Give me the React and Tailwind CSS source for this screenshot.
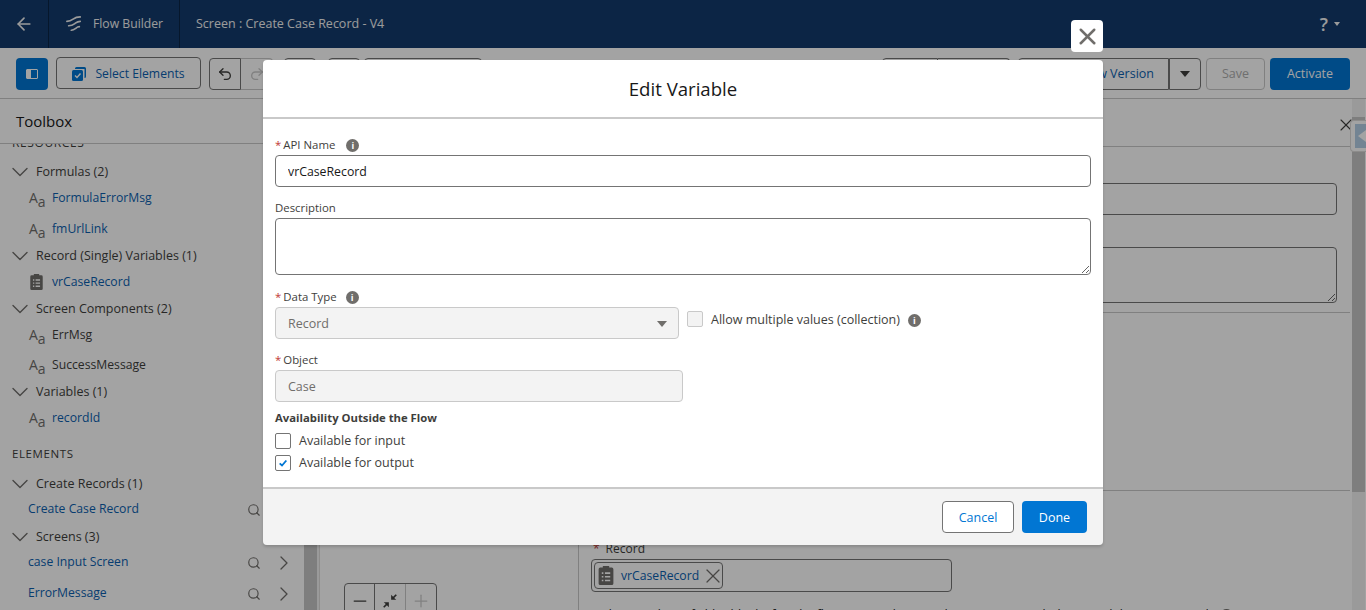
import { ArrowLeft, ChevronDown, ChevronRight, Search, X, Minus, Plus, Undo2, Redo2 } from "lucide-react"

const resources = [
  { name: "Formulas (2)", items: [{ label: "FormulaErrorMsg", link: true }, { label: "fmUrlLink", link: true }] },
  { name: "Record (Single) Variables (1)", items: [{ label: "vrCaseRecord", link: true, record: true }] },
  { name: "Screen Components (2)", tight: true, items: [{ label: "ErrMsg" }, { label: "SuccessMessage" }] },
  { name: "Variables (1)", items: [{ label: "recordId", link: true }] },
]

const elements = [
  { name: "Create Records (1)", items: ["Create Case Record"] },
  { name: "Screens (3)", items: ["case Input Screen", "ErrorMessage"] },
]

function ClipboardIcon({ className }) {
  return (
    <svg viewBox="0 0 16 18" className={className} fill="currentColor">
      <path d="M5 0h6v1.500h2.500A1.500 1.500 0 0 1 15 3v13.500a1.500 1.500 0 0 1-1.500 1.500h-11A1.500 1.500 0 0 1 1 16.500V3a1.500 1.500 0 0 1 1.500-1.500H5z" />
      <path d="M4 6h1.500v1.500H4zM7 6h5v1.500H7zM4 9.500h1.500V11H4zM7 9.500h5V11H7zM4 13h1.500v1.500H4zM7 13h5v1.500H7z" fill="#fff" />
    </svg>
  )
}

function FlowLogo() {
  return (
    <svg viewBox="0 0 18 18" className="h-4 w-4 shrink-0" fill="none" stroke="currentColor" strokeWidth="1.900" strokeLinecap="round">
      <path d="M1 6c3 0 5-1 7-2.500S12 1 16 1" />
      <path d="M3 11c3 0 5-1 7-2.500S13 6 16 6" />
      <path d="M6 16c2 0 3-.6 4.500-1.800S13 12 15 12" />
    </svg>
  )
}

function InfoDot() {
  return (
    <span className="inline-flex h-[13px] w-[13px] items-center justify-center rounded-full bg-[#706e6b] text-[9px] leading-none font-bold text-white">
      i
    </span>
  )
}

function Req() {
  return <span className="mr-[2px] text-[#c23934]">*</span>
}

function CheckBox({ checked }) {
  return (
    <span className="flex h-4 w-4 items-center justify-center rounded-[2px] border border-[#747474] bg-white">
      {checked && (
        <svg viewBox="0 0 12 12" className="h-[10px] w-[10px]" fill="none" stroke="#0176d3" strokeWidth="2.200">
          <path d="M2 6.500 4.800 9 10 3" />
        </svg>
      )}
    </span>
  )
}

function AaIcon() {
  return (
    <span className="flex w-[23px] shrink-0 items-baseline text-[#706e6b]">
      <span className="text-[14px] leading-none">A</span>
      <span className="relative top-[4px] text-[14px] leading-none">a</span>
    </span>
  )
}

function Group({ name, tight, children }) {
  return (
    <div className="mb-px">
      <div className="flex h-[26px] items-center pl-[6px] text-[#3e3e3c]">
        <ChevronDown size={28} strokeWidth={1.200} className="mr-[2px] shrink-0 text-[#706e6b]" />
        {name}
      </div>
      <div className={tight ? "flex flex-col gap-[4px]" : "flex flex-col gap-[5px]"}>{children}</div>
    </div>
  )
}

function Sidebar() {
  return (
    <aside className="flex h-full w-[320px] shrink-0 flex-col border-r border-[#dddbda] bg-white">
      <div className="flex h-[45px] shrink-0 items-center border-b border-[#c9c9c9] pl-4 text-[15px] text-[#181818]">Toolbox</div>
      <div className="flex min-h-0 flex-1">
        <div className="w-[305px] overflow-hidden">
          <div className="-mt-[10px] mb-[7px] pl-3 text-[12px] tracking-[0.6px] text-[#3e3e3c]">RESOURCES</div>
          {resources.map((group) => (
            <Group key={group.name} name={group.name} tight={group.tight}>
              {group.items.map((item) => (
                <div key={item.label} className="flex h-[26px] items-center pl-[29px]">
                  {item.record ? (
                    <span className="w-[23px] shrink-0">
                      <ClipboardIcon className="h-[16px] w-[15px] text-[#706e6b]" />
                    </span>
                  ) : (
                    <AaIcon />
                  )}
                  <span className={item.link ? "text-[12.200px] text-[#0b5fb0]" : "text-[12.200px] text-[#3e3e3c]"}>{item.label}</span>
                </div>
              ))}
            </Group>
          ))}
          <div className="mt-[14px] mb-[8px] pl-3 text-[11.500px] leading-[18px] tracking-[0.6px] text-[#3e3e3c]">ELEMENTS</div>
          {elements.map((group) => (
            <Group key={group.name} name={group.name}>
              {group.items.map((item) => (
                <div key={item} className="flex h-[26px] items-center pr-[8px] pl-[28px] text-[#0b5fb0]">
                  <span className="flex-1 pb-[2px] text-[12.200px]">{item}</span>
                  <Search size={14} className="mr-[11px] text-[#706e6b]" />
                  <ChevronRight size={24} strokeWidth={1.300} className="text-[#706e6b]" />
                </div>
              ))}
            </Group>
          ))}
        </div>
        <div className="w-[15px] bg-[#f1f1f1]">
          <div className="h-full w-[13px] bg-[#c6c6c6]"></div>
        </div>
      </div>
    </aside>
  )
}

function Toolbar() {
  const outline = "flex h-8 items-center justify-center rounded border border-[#747474] bg-white"
  return (
    <div className="flex h-[51px] shrink-0 items-center justify-between border-b border-[#c9c9c9] bg-white px-4 pt-px">
      <div className="flex items-center">
        <button className="flex h-8 w-8 items-center justify-center rounded bg-[#0176d3]">
          <span className="flex h-[10px] w-3 rounded-[1px] border-[1.500px] border-white">
            <span className="w-1 bg-white"></span>
          </span>
        </button>
        <button className={`${outline} mb-[2px] ml-2 w-[145px] gap-[9px] pt-[2px] text-[12.200px] text-[#0b5fb0]`}>
          <svg viewBox="0 0 14 14" className="h-[14px] w-[14px]">
            <path d="M3 1.500A1.500 1.500 0 0 1 4.500 0h8A1.500 1.500 0 0 1 14 1.500v8a1.500 1.500 0 0 1-1.500 1.500V2h-9.500z" fill="#0176d3" />
            <rect x="0" y="3" width="11" height="11" rx="1.500" fill="#0176d3" />
            <path d="M3 8.500 5 10.500 8.500 6.500" fill="none" stroke="#fff" strokeWidth="1.400" />
          </svg>
          Select Elements
        </button>
        <div className="ml-[8px] flex">
          <button className={`${outline} w-8 rounded-r-none`}>
            <Undo2 size={16} className="text-[#3e3e3c]" />
          </button>
          <button className={`${outline} w-8 rounded-l-none border-l-0 border-[#c9c9c9]`}>
            <Redo2 size={16} className="text-[#c9c9c9]" />
          </button>
        </div>
        <button className={`${outline} ml-[11px] w-8`}></button>
        <button className={`${outline} ml-[12px] w-8`}></button>
        <button className={`${outline} ml-1 w-[118px]`}></button>
      </div>
      <div className="flex items-center">
        <div className="flex">
          <button className={`${outline} w-[56px] rounded-r-none`}></button>
          <button className={`${outline} w-[72px] rounded-l-none border-l-0`}></button>
        </div>
        <div className="ml-2 flex">
          <button className={`${outline} w-[151px] justify-end rounded-r-none pr-[14px] text-[#0b5fb0]`}>Save as New Version</button>
          <button className={`${outline} w-8 rounded-l-none`}>
            <span className="h-0 w-0 border-x-[5px] border-t-[6px] border-x-transparent border-t-[#3e3e3c]"></span>
          </button>
        </div>
        <button className="ml-[5px] flex h-8 w-[59px] items-center justify-center rounded border border-[#c9c9c9] bg-white text-[#aeaeae]">Save</button>
        <button className="ml-[5px] flex h-8 w-[80px] items-center justify-center rounded bg-[#0176d3] text-white">Activate</button>
      </div>
    </div>
  )
}

function PropertiesPanel() {
  const field = "block w-full rounded border border-[#747474] bg-white"
  return (
    <section className="flex h-full w-[772px] shrink-0 flex-col border-l border-[#c9c9c9] bg-white">
      <div className="flex h-[48px] shrink-0 items-center justify-end border-b border-[#c9c9c9] pt-[4px]">
        <X size={20} strokeWidth={1.300} className="-mr-[6px] text-[#3e3e3c]" />
      </div>
      <div className="shrink-0 border-b border-[#c9c9c9] pt-[36px] pr-[13px] pb-[9px] pl-[12px]">
        <input readOnly className={`${field} h-8`} />
        <textarea readOnly className={`${field} mt-[32px] h-[56px]`}></textarea>
      </div>
      <div className="h-[178px] shrink-0 border-b border-[#c9c9c9]"></div>
      <div className="px-[12px] pt-[50px]">
        <div className="text-[12px] leading-[16px] text-[#3e3e3c]">
          <span className="mr-[6px] ml-[2px] text-[#c23934]">*</span>Record
        </div>
        <div className="mt-[2px] flex h-[33px] w-[361px] items-center rounded border border-[#747474] px-[2px]">
          <div className="flex h-[27px] w-[129px] items-center gap-[6px] rounded border border-[#747474] pl-[2px]">
            <ClipboardIcon className="h-[19px] w-[18px] shrink-0 text-[#706e6b]" />
            <span className="text-[12.200px] text-[#0b5fb0]">vrCaseRecord</span>
            <X size={24} strokeWidth={1.200} className="-ml-[4px] shrink-0 text-[#706e6b]" />
          </div>
        </div>
        <p className="mt-[14px] flex items-center gap-2 whitespace-nowrap text-[12.200px] text-[#181818]">
          Make sure the ID field is blank after the flow creates the record ID input to match the record that you created.
          <InfoDot />
        </p>
      </div>
    </section>
  )
}

function EditVariableModal() {
  const label = "block text-[11.400px] leading-[16px] text-[#3e3e3c]"
  const input = "block h-8 w-full rounded border border-[#747474] bg-white px-3 text-[12.300px] text-[#181818] outline-none"
  const disabled = "flex h-8 items-center rounded border border-[#c9c9c9] bg-[#f3f3f3] px-3 pt-px text-[#706e6b]"
  return (
    <div className="absolute inset-0 bg-black/[.36]">
      <button className="absolute top-[20px] left-[1071px] flex h-8 w-8 items-center justify-center rounded bg-white text-[#706e6b]">
        <X size={27} strokeWidth={2.200} />
      </button>
      <div className="absolute top-[60px] left-[263px] w-[840px] rounded shadow-[0_2px_3px_rgba(0,0,0,0.16)]">
        <header className="flex h-[59px] items-center justify-center rounded-t border-b-2 border-[#c9c9c9] bg-white text-[18.600px] text-[#181818]">
          Edit Variable
        </header>
        <div className="h-[368px] bg-white px-3 pt-[18px]">
          <label className={`${label} flex items-center`}>
            <Req />API Name<span className="ml-[11px] flex"><InfoDot /></span>
          </label>
          <input readOnly value="vrCaseRecord" className={`${input} mt-[2px]`} />
          <label className={`${label} mt-[13px]`}>Description</label>
          <textarea readOnly className="mt-[2px] block h-[57px] w-full rounded border border-[#747474] bg-white px-3 outline-none"></textarea>
          <label className={`${label} mt-[14px] flex items-center`}>
            <Req />Data Type<span className="ml-[9px] flex"><InfoDot /></span>
          </label>
          <div className="mt-[2px] flex">
            <div className={`${disabled} w-[404px] justify-between pr-[11px]`}>
              Record
              <span className="h-0 w-0 border-x-[5px] border-t-[6px] border-x-transparent border-t-[#706e6b]"></span>
            </div>
            <div className="ml-2 flex items-start gap-2">
              <span className="mt-[4px] h-4 w-4 rounded-[2px] border border-[#c9c9c9] bg-[#f3f3f3]"></span>
              <span className="mt-[4px] text-[#3e3e3c]">Allow multiple values (collection)</span>
              <span className="mt-[7px] flex"><InfoDot /></span>
            </div>
          </div>
          <label className={`${label} mt-[13px]`}>
            <Req />Object
          </label>
          <div className={`${disabled} mt-[2px] w-[408px]`}>Case</div>
          <div className="mt-[8px] text-[11.300px] leading-[16px] font-bold text-[#3e3e3c]">Availability Outside the Flow</div>
          <div className="mt-[4px] flex h-[22px] items-center gap-2 text-[#3e3e3c]">
            <CheckBox />Available for input
          </div>
          <div className="flex h-[22px] items-center gap-2 text-[#3e3e3c]">
            <CheckBox checked />Available for output
          </div>
        </div>
        <footer className="flex h-[58px] items-center justify-end gap-2 rounded-b border-t-2 border-[#c9c9c9] bg-[#f3f3f3] pr-4">
          <button className="flex h-8 w-[72px] items-center justify-center rounded border border-[#747474] bg-white pt-px text-[#0176d3]">Cancel</button>
          <button className="flex h-8 w-[65px] items-center justify-center rounded bg-[#0176d3] pt-px text-white">Done</button>
        </footer>
      </div>
    </div>
  )
}

export default function App() {
  return (
    <div className="relative flex h-[610px] w-[1366px] flex-col overflow-hidden bg-white font-['Open_Sans',sans-serif] text-[12.500px] leading-[18px]">
      {/* Top bar */}
      <div className="flex h-12 shrink-0 items-center bg-[#133b6d] text-[#f3f3f3]">
        <div className="flex h-full w-[49px] items-center justify-center border-r border-[#0a2445]">
          <ArrowLeft size={20} strokeWidth={2} />
        </div>
        <div className="flex h-full w-[131px] items-center gap-[11px] border-r border-[#0a2445] pl-[17px] text-[12.200px]">
          <FlowLogo />
          Flow Builder
        </div>
        <div className="pl-4">Screen : Create Case Record - V4</div>
        <div className="ml-auto flex items-center gap-[6px] pr-[26px]">
          <span className="text-[18px] font-semibold">?</span>
          <span className="h-0 w-0 border-x-[3.500px] border-t-[4px] border-x-transparent border-t-[#f3f3f3]"></span>
        </div>
      </div>

      <Toolbar />

      <div className="flex min-h-0 flex-1">
        <Sidebar />
        {/* Canvas */}
        <main className="h-full w-[258px] shrink-0 bg-white pt-[484px] pl-[24px]">
          <div className="flex h-9 w-[93px] rounded border border-[#747474] bg-white">
            <div className="flex w-[31px] items-center justify-center border-r border-[#747474] text-[#3e3e3c]"><Minus size={20} strokeWidth={1.500} /></div>
            <div className="flex w-[31px] items-center justify-center border-r border-[#c9c9c9] text-[#3e3e3c]">
              <svg viewBox="0 0 14 14" className="h-4 w-4" fill="currentColor">
                <path d="M8 6V1.500l1.700 1.700L12 1l1 1-2.300 2.300L12.500 6zM6 8v4.500l-1.700-1.700L2 13l-1-1 2.300-2.300L1.500 8z" />
              </svg>
            </div>
            <div className="flex w-[31px] items-center justify-center text-[#c9c9c9]"><Plus size={20} strokeWidth={1.500} /></div>
          </div>
        </main>
        <PropertiesPanel />
        <div className="ml-[2px] h-[512px] w-[13px] bg-[#f1f1f1] pt-[18px]">
          <div className="h-[375px] bg-[#c6c6c6]"></div>
        </div>
      </div>

      {/* panel collapse handle */}
      <div className="absolute top-[120px] left-[1350px] flex h-[32px] w-[16px] items-center rounded-l border border-r-0 border-[#dddbda] bg-white pl-[4px]">
        <div className="flex h-[24px] w-[11px] items-center justify-end bg-[#b4cfe6]">
          <span className="h-0 w-0 border-y-[6px] border-r-[8px] border-y-transparent border-r-white"></span>
        </div>
      </div>

      <EditVariableModal />
    </div>
  )
}
